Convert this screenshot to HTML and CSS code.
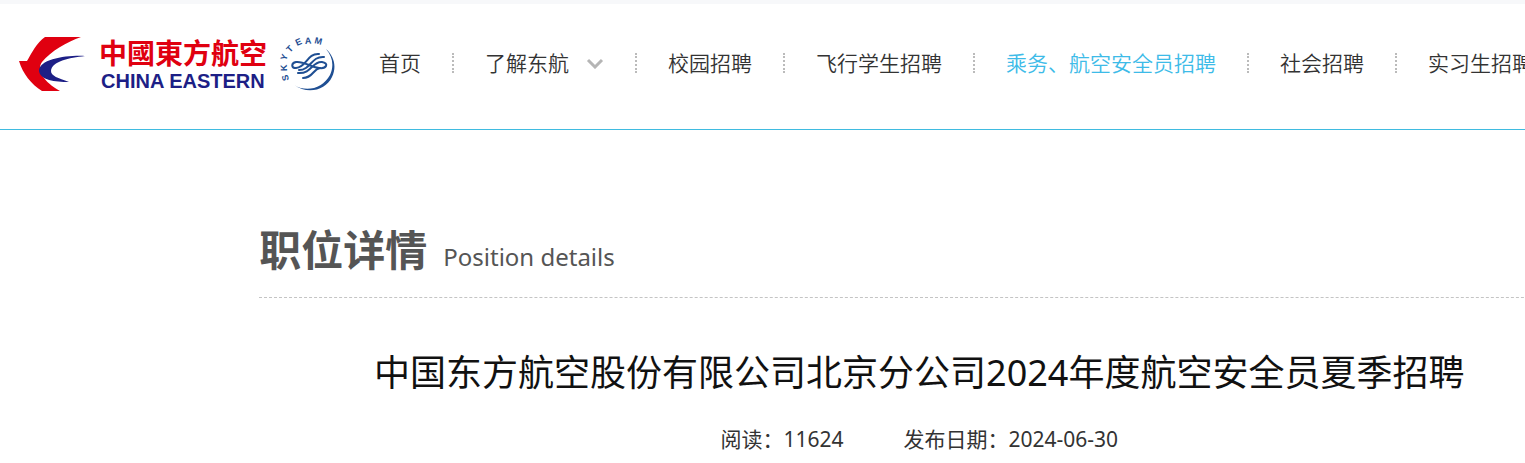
FILE: index.html
```html
<!DOCTYPE html>
<html lang="zh-CN">
  <head>
    <meta charset="UTF-8" />
    <meta name="viewport" content="width=device-width, initial-scale=1.0" />
    <title>职位详情</title>
    <link rel="stylesheet" href="styles.css">
  </head>
  <body>
    <header class="header">
      <a class="logo" href="#" aria-label="中國東方航空 CHINA EASTERN">
        <svg width="316" height="54" viewBox="0 0 316 54">
          <!-- swallow -->
          <path fill="#e00010" d="M26 0H62C48 5 32 14 23 25C17 33 25 45 41 54H23C12 47 4 37 0 24H8C12 17 18 5 26 0Z" />
          <path fill="#1d1f86" d="M66 19C48 18 20 22 20 34C21 43 36 45 50 45C39 41 32 39 32 34C33 24 50 21 66 19Z" />
          <!-- name -->
          <text class="logo-cn" x="80" y="27">中國東方航空</text>
          <text class="logo-en" x="82" y="51">CHINA EASTERN</text>
          <!-- skyteam -->
          <text class="logo-sky" x="270 268 267 271 278 286 295" y="43 34 24 16 9 7 6" rotate="-104 -92 -70 -46 -24 -4 14">SKYTEAM</text>
          <path fill="#1f4f93" d="M307 12C314 20 315 29 311 38C304 51 288 56 275 48C289 58 307 53 313 40C318 30 315 19 307 12Z" />
          <g fill="none" stroke="#1f4f93" stroke-width="2" stroke-linecap="round">
            <path d="M300 17C288 16 288 30 277 31C272 31 272 26 277 25C285 24 291 30 300 31C308 32 310 26 303 25C293 24 293 37 279 36" />
            <path d="M305 20C292 19 292 33 280 33" />
            <path d="M301 31C294 32 294 41 284 41" />
          </g>
        </svg>
      </a>
      <nav>
        <ul class="nav">
          <li><a href="#">首页</a></li>
          <li>
            <a href="#">了解东航
              <svg class="arrow" width="18" height="12" viewBox="0 0 18 12">
                <path d="M2 3L9 10L16 3" fill="none" stroke="#b5b5b5" stroke-width="3" />
              </svg>
            </a>
          </li>
          <li><a href="#">校园招聘</a></li>
          <li><a href="#">飞行学生招聘</a></li>
          <li><a class="active" href="#">乘务、航空安全员招聘</a></li>
          <li><a href="#">社会招聘</a></li>
          <li><a href="#">实习生招聘</a></li>
        </ul>
      </nav>
    </header>

    <main class="container">
      <h2 class="page-title">职位详情 <span>Position details</span></h2>
      <h1 class="article-title">中国东方航空股份有限公司北京分公司2024年度航空安全员夏季招聘</h1>
      <div class="article-info">
        <span>阅读：11624</span>
        <span>发布日期：2024-06-30</span>
      </div>
    </main>
  </body>
</html>
```
FILE: styles.css
```css
body {
  font-family: "Noto Sans", "Noto Sans CJK SC", sans-serif;
  font-weight: 350;
  background-color: #fff;
  color: #333;
  margin: 0;
  overflow-x: hidden;
}

a {
  color: inherit;
  text-decoration: none;
}

.header {
  display: flex;
  align-items: center;
  box-sizing: border-box;
  height: 130px;
  border-top: 4px solid #f7f8fa;
  border-bottom: 1px solid #3fbbe0;
  padding: 0 0 6px 19px;
}

.logo {
  flex: none;
}

.logo svg {
  display: block;
}

.logo-cn {
  font: bold 28px "Noto Sans CJK TC", sans-serif;
  fill: #e00010;
}

.logo-en {
  font: bold 20px "Liberation Sans", sans-serif;
  fill: #1d1f86;
}

.logo-sky {
  font: bold 9px "Liberation Sans", sans-serif;
  fill: #1f4f93;
}

.nav {
  display: flex;
  list-style: none;
  margin: 0;
  padding: 0 0 2px 13px;
  font-size: 21px;
  line-height: 20px;
  white-space: nowrap;
}

.nav li {
  padding: 0 31px;
}

.nav li + li {
  border-left: 2px dotted #bbb;
}

.nav a {
  display: flex;
  align-items: center;
}

.active {
  color: #3dbbe8;
}

.arrow {
  margin-left: 17px;
}

.container {
  min-width: 1320px;
  margin: 0 17%;
}

.page-title {
  display: flex;
  align-items: baseline;
  gap: 16px;
  margin: 0;
  padding: 88px 0 16px;
  border-bottom: 1px dashed #c4c4c4;
  font-size: 42px;
  line-height: 63px;
  color: #555;
}

.page-title span {
  font-size: 24px;
  font-weight: 400;
  line-height: 32px;
}

.article-title {
  margin: 48px 0 0;
  font-size: 36px;
  font-weight: 400;
  line-height: 54px;
  text-align: center;
  color: #111;
}

.article-info {
  display: flex;
  justify-content: center;
  gap: 60px;
  margin-top: 24px;
  font-size: 21px;
  font-weight: 400;
  line-height: 30px;
}
```
